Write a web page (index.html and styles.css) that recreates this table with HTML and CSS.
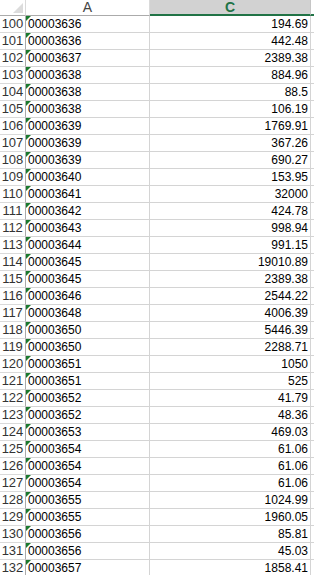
FILE: index.html
```html
<!DOCTYPE html>
<html>
<head>
<meta charset="utf-8">
<link rel="stylesheet" href="styles.css">
</head>
<body>
<div class="sheet">
  <div class="row head">
    <div class="corner"><svg width="25" height="15" viewBox="0 0 25 15"><polygon points="23,3 23,13 13,13" fill="#dcdcdc"/></svg></div>
    <div class="colhead">A</div>
    <div class="colhead sel">C</div>
    <div class="colhead end"></div>
  </div>
  <div class="row"><div class="rh">100</div><div class="ca">00003636</div><div class="cc">194.69</div><div class="ce"></div></div>
  <div class="row"><div class="rh">101</div><div class="ca">00003636</div><div class="cc">442.48</div><div class="ce"></div></div>
  <div class="row"><div class="rh">102</div><div class="ca">00003637</div><div class="cc">2389.38</div><div class="ce"></div></div>
  <div class="row"><div class="rh">103</div><div class="ca">00003638</div><div class="cc">884.96</div><div class="ce"></div></div>
  <div class="row"><div class="rh">104</div><div class="ca">00003638</div><div class="cc">88.5</div><div class="ce"></div></div>
  <div class="row"><div class="rh">105</div><div class="ca">00003638</div><div class="cc">106.19</div><div class="ce"></div></div>
  <div class="row"><div class="rh">106</div><div class="ca">00003639</div><div class="cc">1769.91</div><div class="ce"></div></div>
  <div class="row"><div class="rh">107</div><div class="ca">00003639</div><div class="cc">367.26</div><div class="ce"></div></div>
  <div class="row"><div class="rh">108</div><div class="ca">00003639</div><div class="cc">690.27</div><div class="ce"></div></div>
  <div class="row"><div class="rh">109</div><div class="ca">00003640</div><div class="cc">153.95</div><div class="ce"></div></div>
  <div class="row"><div class="rh">110</div><div class="ca">00003641</div><div class="cc">32000</div><div class="ce"></div></div>
  <div class="row"><div class="rh">111</div><div class="ca">00003642</div><div class="cc">424.78</div><div class="ce"></div></div>
  <div class="row"><div class="rh">112</div><div class="ca">00003643</div><div class="cc">998.94</div><div class="ce"></div></div>
  <div class="row"><div class="rh">113</div><div class="ca">00003644</div><div class="cc">991.15</div><div class="ce"></div></div>
  <div class="row"><div class="rh">114</div><div class="ca">00003645</div><div class="cc">19010.89</div><div class="ce"></div></div>
  <div class="row"><div class="rh">115</div><div class="ca">00003645</div><div class="cc">2389.38</div><div class="ce"></div></div>
  <div class="row"><div class="rh">116</div><div class="ca">00003646</div><div class="cc">2544.22</div><div class="ce"></div></div>
  <div class="row"><div class="rh">117</div><div class="ca">00003648</div><div class="cc">4006.39</div><div class="ce"></div></div>
  <div class="row"><div class="rh">118</div><div class="ca">00003650</div><div class="cc">5446.39</div><div class="ce"></div></div>
  <div class="row"><div class="rh">119</div><div class="ca">00003650</div><div class="cc">2288.71</div><div class="ce"></div></div>
  <div class="row"><div class="rh">120</div><div class="ca">00003651</div><div class="cc">1050</div><div class="ce"></div></div>
  <div class="row"><div class="rh">121</div><div class="ca">00003651</div><div class="cc">525</div><div class="ce"></div></div>
  <div class="row"><div class="rh">122</div><div class="ca">00003652</div><div class="cc">41.79</div><div class="ce"></div></div>
  <div class="row"><div class="rh">123</div><div class="ca">00003652</div><div class="cc">48.36</div><div class="ce"></div></div>
  <div class="row"><div class="rh">124</div><div class="ca">00003653</div><div class="cc">469.03</div><div class="ce"></div></div>
  <div class="row"><div class="rh">125</div><div class="ca">00003654</div><div class="cc">61.06</div><div class="ce"></div></div>
  <div class="row"><div class="rh">126</div><div class="ca">00003654</div><div class="cc">61.06</div><div class="ce"></div></div>
  <div class="row"><div class="rh">127</div><div class="ca">00003654</div><div class="cc">61.06</div><div class="ce"></div></div>
  <div class="row"><div class="rh">128</div><div class="ca">00003655</div><div class="cc">1024.99</div><div class="ce"></div></div>
  <div class="row"><div class="rh">129</div><div class="ca">00003655</div><div class="cc">1960.05</div><div class="ce"></div></div>
  <div class="row"><div class="rh">130</div><div class="ca">00003656</div><div class="cc">85.81</div><div class="ce"></div></div>
  <div class="row"><div class="rh">131</div><div class="ca">00003656</div><div class="cc">45.03</div><div class="ce"></div></div>
  <div class="row"><div class="rh">132</div><div class="ca">00003657</div><div class="cc">1858.41</div><div class="ce"></div></div>
</div>
</body>
</html>
```
FILE: styles.css
```css
html, body {
  margin: 0;
  padding: 0;
  background: #ffffff;
  overflow: hidden;
}
.sheet {
  width: 314px;
  height: 575px;
  overflow: hidden;
  font-family: "Liberation Sans", Arial, sans-serif;
}
.row {
  display: grid;
  grid-template-columns: 26px 124px 161px 3px;
  height: 17px;
}
.row > div {
  box-sizing: border-box;
  border-bottom: 1px solid #d4d4d4;
  border-right: 1px solid #d4d4d4;
  line-height: 16px;
  white-space: nowrap;
  overflow: hidden;
}
.row.head {
  height: 16px;
}
.row.head > div {
  border-bottom: 1px solid #ababab;
  border-right: 1px solid #dadada;
  line-height: 15px;
  font-size: 14px;
  color: #444444;
  text-align: center;
  background: #ffffff;
}
.row.head > .corner {
  border-right: 1px solid #dadada;
  padding: 0;
}
.corner svg {
  display: block;
}
.row.head > .colhead.sel {
  background: #d2d2d2;
  color: #217346;
  font-weight: bold;
  border-bottom: 2px solid #217346;
  border-right: 1px solid #c6c6c6;
  line-height: 14px;
}
.row.head > .colhead.end {
  border-right: none;
  border-bottom: 2px solid #217346;
}
.row > .rh {
  font-size: 13px;
  color: #333333;
  text-align: center;
  border-right: 1px solid #ababab;
  border-bottom: 1px solid #dadada;
}
.row > .ca {
  position: relative;
  font-size: 12px;
  color: #000000;
  padding-left: 2px;
}
.ca::before {
  content: "";
  position: absolute;
  left: 0;
  top: 0;
  width: 0;
  height: 0;
  border-top: 5px solid #1a7a2e;
  border-right: 5px solid transparent;
}
.row > .cc {
  font-size: 12px;
  color: #000000;
  text-align: right;
  padding-right: 2px;
}
.row > .ce {
  border-right: none;
}
```
